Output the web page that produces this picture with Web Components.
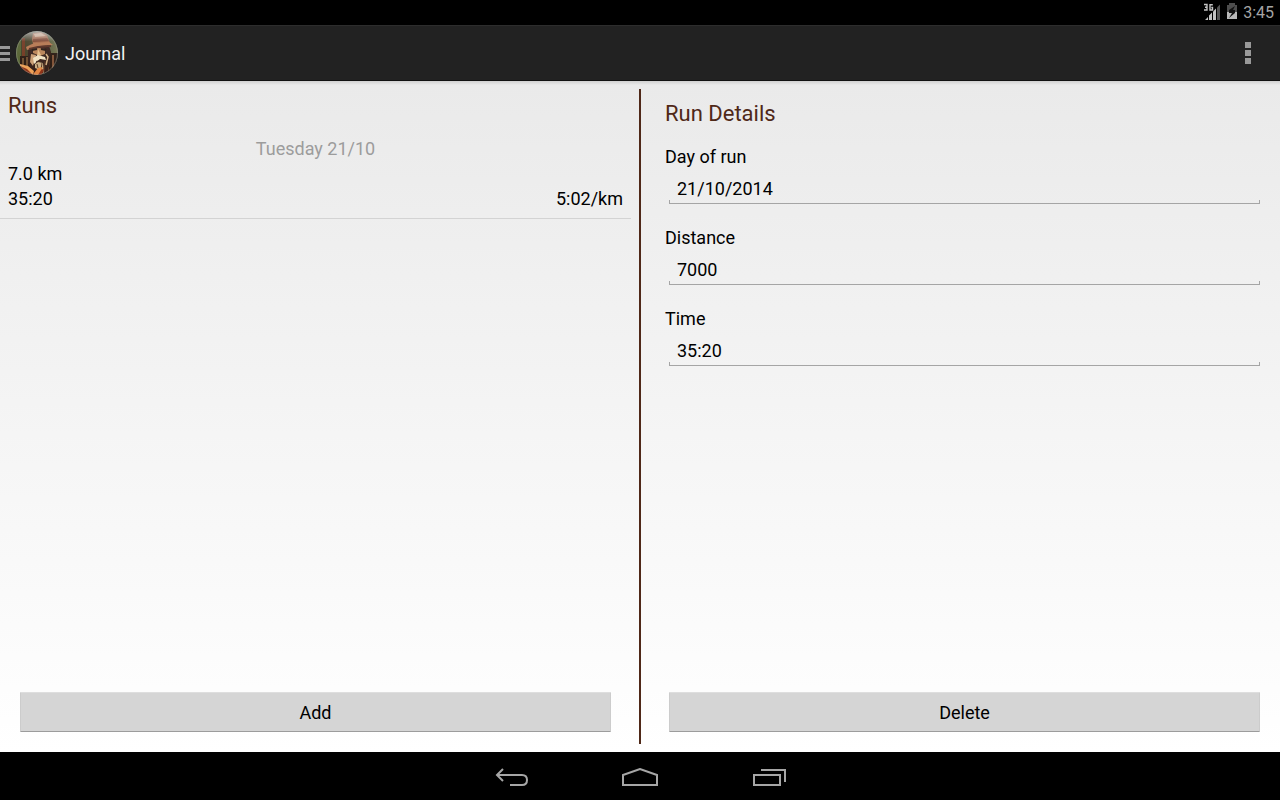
<!DOCTYPE html>
<html lang="en">
<head>
<meta charset="utf-8">
<meta name="viewport" content="width=device-width, initial-scale=1">
<title>Journal</title>
<style>
  html, body { height: 100%; margin: 0; }
  body { font: 18px/25px Roboto, "Noto Sans", sans-serif; color: #000; }
</style>
</head>
<body>
<journal-app></journal-app>
<script>
const define = (name, html, setup) => {
  const template = document.createElement('template');
  template.innerHTML = html;
  customElements.define(name, class extends HTMLElement {
    constructor() {
      super();
      this.attachShadow({ mode: 'open' }).append(template.content.cloneNode(true));
    }
    connectedCallback() { if (setup) setup(this, this.shadowRoot); }
  });
};

define('status-bar', `
<style>
  :host { display: flex; align-items: center; justify-content: flex-end; height: 25px; padding-right: 6px; background: #000; color: #a5a5a5; font-size: 16px; }
  svg { display: block; margin: 0 5px 1px 0; }
</style>
<svg width="18" height="18" viewBox="0 0 18 18" role="img" aria-label="3G signal">
  <path d="M1 1.500h3v5.500H1M2 4.200h2M9.800 1.800H7V7h2.500V4.500H8.300" fill="none" stroke="#c4c4c4" stroke-width="1.400"/>
  <path d="M2 17l3-3v3zM6 12.500l3-3V17H6z" fill="#c4c4c4"/>
  <path d="M10 8.500l3-3V17h-3z" fill="#c4c4c4"/>
  <path d="M14 4.500l3-3V17h-3z" fill="#555"/>
</svg>
<svg width="12" height="18" viewBox="0 0 12 18" role="img" aria-label="Battery charging">
  <path d="M3 0h6v2h2v7H1V2h2z" fill="#4d4d4d"/>
  <path d="M1 9h10v7H1z" fill="#b8b8b8"/>
  <path d="M9 3L3 7v3h3l-3 5 6-5V7H7z" fill="#111"/>
</svg>
<span>3:45</span>`);

define('journal-avatar', `
<style>:host { display: block; } svg { display: block; }</style>
<svg width="44" height="46" viewBox="0 0 44 46" role="img" aria-label="Journal">
  <defs>
    <clipPath id="disc"><ellipse cx="22" cy="23" rx="21" ry="22"/></clipPath>
    <linearGradient id="wall" x1="0" x2="1"><stop offset="0" stop-color="#303d20"/><stop offset=".3" stop-color="#443d22"/><stop offset=".75" stop-color="#555d3c"/><stop offset="1" stop-color="#75724a"/></linearGradient>
    <linearGradient id="sheen" x1="0" y1="0" x2="0" y2="1"><stop offset="0" stop-color="#e0e4e6" stop-opacity=".75"/><stop offset=".25" stop-color="#ccd" stop-opacity=".1"/><stop offset="1" stop-color="#fff" stop-opacity="0"/></linearGradient>
    <filter id="soft"><feGaussianBlur stdDeviation=".5"/></filter>
  </defs>
  <g clip-path="url(#disc)">
    <path d="M0 0h44v46H0z" fill="url(#wall)"/>
    <g filter="url(#soft)">
      <path d="M0 10h6v24H0z" fill="#52602f"/><path d="M7 8h3v18H7z" fill="#70351d"/>
      <path d="M5 26h12v14H5zM31 23h12v19H30z" fill="#28170f"/>
      <path d="M8 28v10M12 27v11" stroke="#805a37" stroke-width="1.500"/>
      <path d="M34 27l-1 14M38 25v14" stroke="#9b633e" stroke-width="1.500"/>
      <path d="M13 18l5-5h15l3 9-3 21H18l-5-9z" fill="#301a12"/>
      <path d="M18 3l8-1 6 3 3 8-17 1-1-5z" fill="#a36543"/>
      <path d="M19 4l7-1 5 3-11 1z" fill="#d3aa87"/>
      <path d="M18 9l14-1 2 3-16 1z" fill="#7c422a"/>
      <path d="M11 17l8-4 15-1 4 3-13 1-13 4z" fill="#b6754c"/>
      <path d="M14 19l9-2 13-1" fill="none" stroke="#542b1b" stroke-width="2"/>
      <path d="M18 19l6-1 6 1v5l-5 2-7-3z" fill="#b98152"/>
      <path d="M17 20l5-1M26 19l5 1" stroke="#23130e" stroke-width="2"/>
      <path d="M23 19l3 6-4 1z" fill="#e6bd86"/>
      <path d="M16 24l5 1-3 11-3-4z" fill="#c99c71"/>
      <path d="M18 28l5-3 7 2 1 3-6-1-6 5z" fill="#f1e1c1"/>
      <path d="M21 31l7-1-2 2-4 2z" fill="#3b2117"/>
      <path d="M20 34l3-2 5 1 1 10-4-3-5-2z" fill="#c9ad81"/>
      <path d="M22 34l1 4M27 33l-1 7M30 31l-1 11" stroke="#55301f"/>
      <path d="M31 24l2 3-2 8" fill="none" stroke="#d4ad80" stroke-width="1.500"/>
      <path d="M3 36l9 2 7 6 4-4 6-1-3 8H8z" fill="#8e3014"/>
      <path d="M5 34l8 2 6 5-1 4-6-6-7-3z" fill="#eda055"/>
      <path d="M19 43l4-5 5-1-5 8-4 1z" fill="#e28440"/>
    </g>
    <path d="M0 0h44v46H0z" fill="url(#sheen)"/>
  </g>
  <ellipse cx="22" cy="23" rx="20.500" ry="21.500" fill="none" stroke="#a2a5a5" stroke-opacity=".4"/>
</svg>`);

define('action-bar', `
<style>
  :host { display: flex; align-items: center; height: 56px; box-sizing: border-box; background: #222; color: #f3f3f3; border-top: 1px solid #2d2d2d; border-bottom: 1px solid #111; }
  button { border: 0; padding: 0; background: none; display: block; }
  svg { display: block; }
  journal-avatar { margin: 0 6px 0 5px; }
  h1 { flex: 1; font: inherit; margin: 0; }
  .more { width: 64px; }
  .more svg { margin: auto; }
</style>
<button aria-label="Open navigation"><svg width="10" height="16" viewBox="0 0 10 16"><path d="M0 1h10v3H0zM0 7h10v3H0zM0 13h10v3H0z" fill="#999"/></svg></button>
<journal-avatar></journal-avatar>
<h1><slot></slot></h1>
<button class="more" aria-label="More options"><svg width="6" height="22" viewBox="0 0 6 22"><path d="M0 0h6v6H0zM0 8h6v6H0zM0 16h6v6H0z" fill="#999"/></svg></button>`);

define('holo-button', `
<style>
  :host { display: block; margin: 0 20px 20px; }
  button { display: block; width: 100%; height: 40px; padding: 0; border: 1px solid #ccc; border-top-color: #dedede; border-bottom-color: #9c9c9c; border-radius: 1px; background: #d5d5d5; color: #000; font: inherit; }
</style>
<button><slot></slot></button>`);

define('text-field', `
<style>
  :host { display: block; height: 81px; }
  label { display: block; }
  .line { margin: 0 4px; height: 35px; box-sizing: border-box; border-bottom: 1px solid #a5a5a5;
    background: linear-gradient(#a5a5a5, #a5a5a5) 0 100% / 1px 3px no-repeat, linear-gradient(#a5a5a5, #a5a5a5) 100% 100% / 1px 3px no-repeat; }
  input { display: block; width: 100%; height: 34px; box-sizing: border-box; padding: 6px 8px 2px; border: 0; background: none; outline: 0; font: inherit; color: inherit; }
</style>
<label for="field"></label>
<div class="line"><input id="field" type="text"></div>`, (host, root) => {
  root.querySelector('label').textContent = host.getAttribute('label');
  root.querySelector('input').value = host.getAttribute('value');
});

define('run-item', `
<style>
  :host { display: block; padding: 0 8px 7px; border-bottom: 1px solid #d3d3d3; }
  .date { text-align: center; color: #9c9c9c; }
  .row { display: flex; justify-content: space-between; }
</style>
<div class="date"><slot name="date"></slot></div>
<div><slot name="distance"></slot></div>
<div class="row"><slot name="time"></slot><slot name="pace"></slot></div>`);

define('content-pane', `
<style>
  :host { display: flex; flex-direction: column; flex: 1; min-width: 0; }
  .body { flex: 1; }
  h2 { margin: 0 0 13px; font-size: 22px; line-height: 34px; font-weight: 400; color: #4f2818; }
</style>
<div class="body" part="body"><h2 part="title"><slot name="title"></slot></h2><slot></slot></div>
<slot name="action"></slot>`);

define('nav-bar', `
<style>
  :host { display: flex; justify-content: center; height: 48px; background: #000; }
  button { width: 128px; border: 0; padding: 4px 0 0; background: none; }
  svg { display: block; margin: auto; fill: none; stroke: #a6a6a6; stroke-width: 2; }
</style>
<button aria-label="Back"><svg width="34" height="20" viewBox="0 0 34 20"><path d="M2 7h25q5 0 5 5t-5 5H15M8 1L2 7l6 6"/></svg></button>
<button aria-label="Home"><svg width="38" height="20" viewBox="0 0 38 20"><path d="M2 17V7l17-6 17 6v10z"/></svg></button>
<button aria-label="Recent apps"><svg width="36" height="20" viewBox="0 0 36 20"><path d="M4 7h26v10H4zM11 2h24v12"/></svg></button>`);

define('journal-app', `
<style>
  :host { display: flex; flex-direction: column; min-height: 100%; }
  main { flex: 1; display: flex; gap: 8px; background: linear-gradient(#d0d0d0, #eaeaea 4px, #fff); }
  .runs::part(body) { padding-top: 8px; }
  .runs::part(title) { padding: 0 8px; }
  .details::part(body) { padding: 16px 16px 0; }
  .divider { width: 2px; margin: 8px 0; background: #4f2818; }
</style>
<status-bar></status-bar>
<action-bar>Journal</action-bar>
<main>
  <content-pane class="runs">
    <span slot="title">Runs</span>
    <run-item><span slot="date">Tuesday 21/10</span><span slot="distance">7.0 km</span><span slot="time">35:20</span><span slot="pace">5:02/km</span></run-item>
    <holo-button slot="action">Add</holo-button>
  </content-pane>
  <div class="divider"></div>
  <content-pane class="details">
    <span slot="title">Run Details</span>
    <text-field label="Day of run" value="21/10/2014"></text-field>
    <text-field label="Distance" value="7000"></text-field>
    <text-field label="Time" value="35:20"></text-field>
    <holo-button slot="action">Delete</holo-button>
  </content-pane>
</main>
<nav-bar></nav-bar>`);
</script>
</body>
</html>
